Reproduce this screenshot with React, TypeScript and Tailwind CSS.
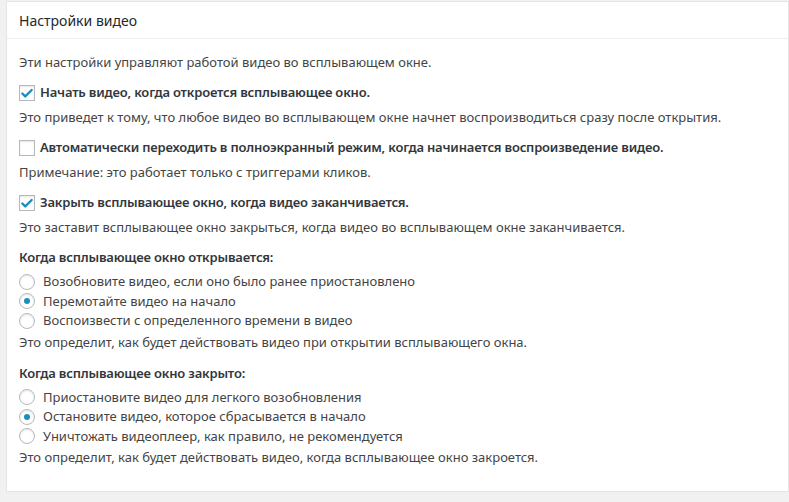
import { Check } from "lucide-react";

const font = { fontFamily: '"Noto Sans", "Open Sans", sans-serif' };

function Checkbox({ checked }: { checked: boolean }) {
  return (
    <span className="flex h-4 w-4 shrink-0 items-center justify-center border border-[#b4b9be] bg-white shadow-[inset_0_1px_2px_rgba(0,0,0,0.1)]">
      {checked && <Check className="h-[15px] w-[15px] text-[#1e8cbe]" strokeWidth={4} />}
    </span>
  );
}

function Radio({ checked }: { checked: boolean }) {
  return (
    <span className="flex h-4 w-4 shrink-0 items-center justify-center rounded-full border border-[#b4b9be] bg-white shadow-[inset_0_1px_2px_rgba(0,0,0,0.1)]">
      {checked && <span className="h-[6px] w-[6px] rounded-full bg-[#1e8cbe]" />}
    </span>
  );
}

function CheckRow({ checked, label, help }: { checked: boolean; label: string; help: string }) {
  return (
    <div className="mt-[9px]">
      <label className="flex h-[22px] items-center gap-[5px] font-semibold tracking-[-0.18px] text-[#32373c]">
        <Checkbox checked={checked} />
        {label}
      </label>
      <p className="mt-[2px] leading-[22px]">{help}</p>
    </div>
  );
}

function RadioGroup({
  title,
  options,
  selected,
  help,
  className,
}: {
  title: string;
  options: string[];
  selected: number;
  help: string;
  className: string;
}) {
  return (
    <div className={className}>
      <p className="font-semibold leading-[22px] tracking-[-0.18px] text-[#32373c]">{title}</p>
      <div className="mt-[4px] flex flex-col">
        {options.map((o, i) => (
          <label key={o} className="flex h-[19.5px] items-center gap-[8px]">
            <Radio checked={i === selected} />
            {o}
          </label>
        ))}
      </div>
      <p className="leading-[22px]">{help}</p>
    </div>
  );
}

export default function App() {
  return (
    <div className="min-h-[502px] bg-[#f1f1f1] pl-[6px] pt-[1px]" style={font}>
      <div className="h-[491px] border border-[#e5e5e5] bg-white text-[13px] text-[#444]">
        <div className="flex h-[37px] items-center border-b border-[#eee] px-[12px]">
          <h2 className="text-[14px] text-[#23282d]">Настройки видео</h2>
        </div>
        <div className="px-[12px] pt-[12px]">
          <p className="leading-[22px]">Эти настройки управляют работой видео во всплывающем окне.</p>
          <CheckRow
            checked
            label="Начать видео, когда откроется всплывающее окно."
            help="Это приведет к тому, что любое видео во всплывающем окне начнет воспроизводиться сразу после открытия."
          />
          <CheckRow
            checked={false}
            label="Автоматически переходить в полноэкранный режим, когда начинается воспроизведение видео."
            help="Примечание: это работает только с триггерами кликов."
          />
          <CheckRow
            checked
            label="Закрыть всплывающее окно, когда видео заканчивается."
            help="Это заставит всплывающее окно закрыться, когда видео во всплывающем окне заканчивается."
          />
          <RadioGroup
            className="mt-[8px]"
            title="Когда всплывающее окно открывается:"
            options={[
              "Возобновите видео, если оно было ранее приостановлено",
              "Перемотайте видео на начало",
              "Воспоизвести с определенного времени в видео",
            ]}
            selected={1}
            help="Это определит, как будет действовать видео при открытии всплывающего окна."
          />
          <RadioGroup
            className="mt-[9px]"
            title="Когда всплывающее окно закрыто:"
            options={[
              "Приостановите видео для легкого возобновления",
              "Остановите видео, которое сбрасывается в начало",
              "Уничтожать видеоплеер, как правило, не рекомендуется",
            ]}
            selected={1}
            help="Это определит, как будет действовать видео, когда всплывающее окно закроется."
          />
        </div>
      </div>
    </div>
  );
}
